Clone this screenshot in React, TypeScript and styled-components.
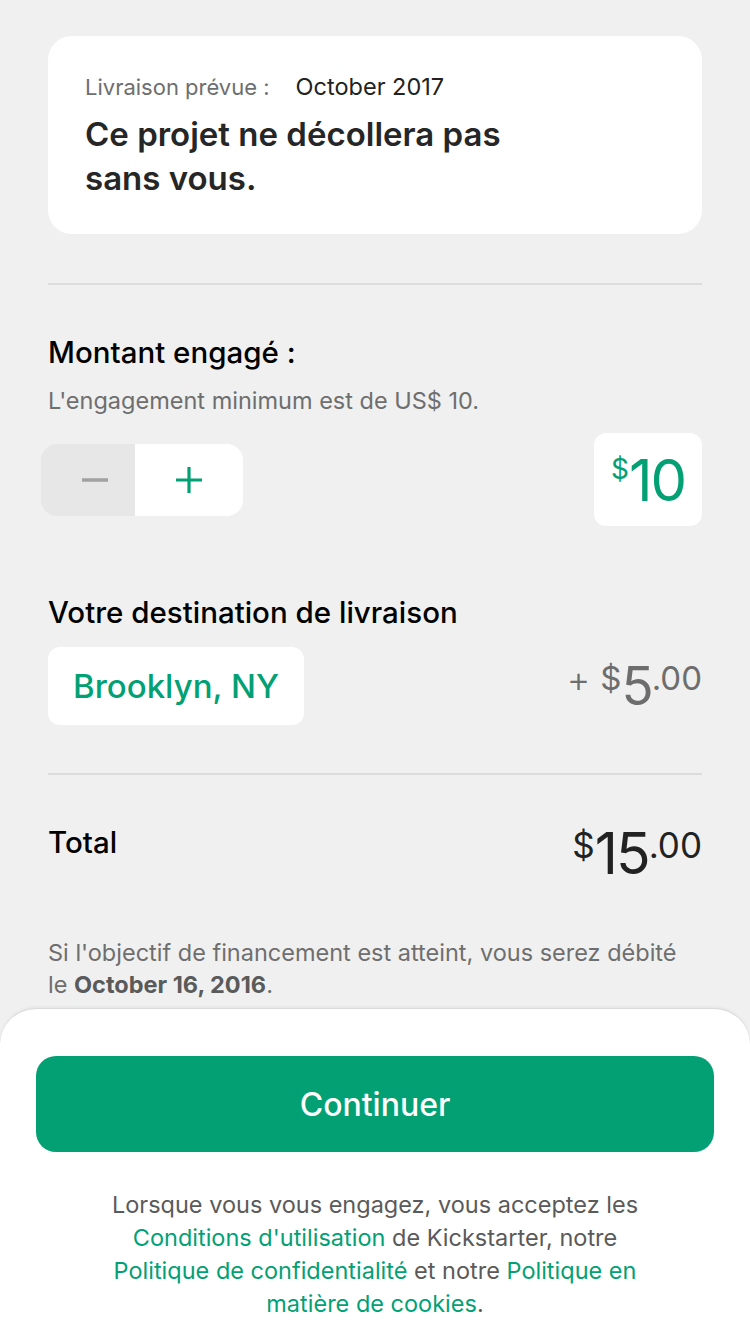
import * as React from "react";
import styled, { createGlobalStyle } from "styled-components";

const GREEN = "#03a074";

const GlobalStyle = createGlobalStyle`
    html, body {
        margin: 0;
        padding: 0;
        background: #f0f0f0;
        font-family: Inter, "Noto Sans", sans-serif;
        -webkit-font-smoothing: antialiased;
    }
    * {
        box-sizing: border-box;
    }
`;

export default function App(): React.ReactElement {
    return (
        <>
            <GlobalStyle />
            <Page>
                <Main>
                    <Card>
                        <DeliveryLine>
                            Livraison prévue :<DeliveryDate>October 2017</DeliveryDate>
                        </DeliveryLine>
                        <Headline>
                            Ce projet ne décollera pas
                            <br />
                            sans vous.
                        </Headline>
                    </Card>

                    <Divider />

                    <SectionTitle>Montant engagé :</SectionTitle>
                    <Hint>L'engagement minimum est de US$ 10.</Hint>
                    <StepperRow>
                        <Stepper>
                            <StepButton disabled>
                                <svg width="28" height="28" viewBox="0 0 28 28">
                                    <path d="M1 14h26" stroke="#a2a2a2" strokeWidth="3.5" />
                                </svg>
                            </StepButton>
                            <StepButton active>
                                <svg width="28" height="28" viewBox="0 0 28 28">
                                    <path d="M1 14h26M14 1v26" stroke={GREEN} strokeWidth="3.2" />
                                </svg>
                            </StepButton>
                        </Stepper>
                        <AmountBox>
                            <Price color={GREEN} big={58} small={28}>
                                <Sup>$</Sup>
                                <Big>10</Big>
                            </Price>
                        </AmountBox>
                    </StepperRow>

                    <SectionTitle top={69}>Votre destination de livraison</SectionTitle>
                    <ShippingRow>
                        <LocationButton>Brooklyn, NY</LocationButton>
                        <Price color="#6d6d6d" big={53} small={33}>
                            <Plus>+</Plus>
                            <Sup>$</Sup>
                            <Big>5</Big>
                            <Sup>.00</Sup>
                        </Price>
                    </ShippingRow>

                    <Divider top={48} />

                    <TotalRow>
                        <SectionTitle top={0}>Total</SectionTitle>
                        <Price color="#222" big={57} small={35}>
                            <Sup>$</Sup>
                            <Big>15</Big>
                            <Sup>.00</Sup>
                        </Price>
                    </TotalRow>

                    <Note>
                        Si l'objectif de financement est atteint, vous serez débité le{" "}
                        <strong>October 16, 2016</strong>.
                    </Note>
                </Main>

                <Sheet>
                    <ContinueButton>Continuer</ContinueButton>
                    <Legal>
                        Lorsque vous vous engagez, vous acceptez les <Link>Conditions d'utilisation</Link> de
                        Kickstarter, notre <Link>Politique de confidentialité</Link> et notre{" "}
                        <Link>Politique en matière de cookies</Link>.
                    </Legal>
                </Sheet>
            </Page>
        </>
    );
}

const Page = styled.div`
    min-height: 100vh;
    display: flex;
    flex-direction: column;
`;

const Main = styled.main`
    flex: 1;
    padding: 36px 48px 0;
    display: flex;
    flex-direction: column;
`;

const Card = styled.section`
    background: #fff;
    border-radius: 24px;
    padding: 36px 37px 34px;
`;

const DeliveryLine = styled.div`
    font-size: 22px;
    line-height: 30px;
    color: #6e6e6e;
`;

const DeliveryDate = styled.span`
    font-size: 23.5px;
    color: #222;
    margin-left: 26px;
`;

const Headline = styled.h1`
    margin: 10px 0 0;
    font-size: 33px;
    line-height: 44px;
    font-weight: 600;
    color: #262626;
`;

const Divider = styled.hr<{ top?: number }>`
    border: none;
    height: 2px;
    background: #dcdcdc;
    margin: ${(p) => p.top ?? 49}px 0 0;
`;

const SectionTitle = styled.h2<{ top?: number }>`
    margin: ${(p) => p.top ?? 50}px 0 0;
    font-size: 29.5px;
    line-height: 34px;
    font-weight: 500;
    color: #000;
`;

const Hint = styled.p`
    margin: 18px 0 0;
    font-size: 23.5px;
    line-height: 28px;
    color: #6e6e6e;
`;

const StepperRow = styled.div`
    margin-top: 18px;
    display: flex;
    align-items: center;
    justify-content: space-between;
`;

const Stepper = styled.div`
    margin-left: -7px;
    display: flex;
    height: 72px;
    border-radius: 16px;
    overflow: hidden;
`;

const StepButton = styled.button<{ active?: boolean }>`
    border: none;
    padding: 0 0 0 ${(p) => (p.active ? 0 : 14)}px;
    width: ${(p) => (p.active ? 108 : 94)}px;
    height: 72px;
    display: flex;
    align-items: center;
    justify-content: center;
    background: ${(p) => (p.active ? "#fff" : "#e7e7e7")};
`;

const AmountBox = styled.div`
    width: 108px;
    height: 93px;
    background: #fff;
    border-radius: 12px;
    display: flex;
    align-items: center;
    justify-content: center;
`;

const Price = styled.div<{ color: string; big: number; small: number }>`
    display: flex;
    align-items: flex-start;
    color: ${(p) => p.color};
    font-weight: 400;

    --big: ${(p) => p.big}px;
    --small: ${(p) => p.small}px;
`;

const Big = styled.span`
    font-size: var(--big);
    line-height: 1;
    letter-spacing: -2px;
`;

const Sup = styled.span`
    font-size: var(--small);
    line-height: 1;
    margin-top: calc((var(--big) - var(--small)) * 0.137);
`;

const Plus = styled.span`
    font-size: 36px;
    font-weight: 300;
    line-height: 1;
    margin: 1px 10px 0 0;
`;

const ShippingRow = styled.div`
    margin-top: 18px;
    display: flex;
    align-items: center;
    justify-content: space-between;
`;

const LocationButton = styled.button`
    border: none;
    background: #fff;
    border-radius: 12px;
    height: 78px;
    padding: 0 25px;
    font-family: inherit;
    font-size: 33px;
    font-weight: 500;
    color: ${GREEN};
`;

const TotalRow = styled.div`
    margin-top: 50px;
    display: flex;
    align-items: flex-start;
    justify-content: space-between;
`;

const Note = styled.p`
    margin: 55px 0 0;
    font-size: 23.5px;
    line-height: 32px;
    color: #6e6e6e;

    strong {
        font-weight: 700;
        color: #5a5a5a;
    }
`;

const Sheet = styled.footer`
    background: #fff;
    border-radius: 36px 36px 0 0;
    border-top: 1px solid #dadada;
    box-shadow: 0 -1px 3px rgba(0, 0, 0, 0.06);
    padding: 47px 36px 10px;
    height: 326px;
`;

const ContinueButton = styled.button`
    width: 100%;
    height: 96px;
    border: none;
    border-radius: 20px;
    background: ${GREEN};
    color: #fff;
    font-family: inherit;
    font-size: 32px;
    font-weight: 500;
`;

const Legal = styled.p`
    margin: 36px 58px 0;
    text-align: center;
    font-size: 23.5px;
    line-height: 33px;
    color: #5a5a5a;
`;

const Link = styled.span`
    color: ${GREEN};
`;
